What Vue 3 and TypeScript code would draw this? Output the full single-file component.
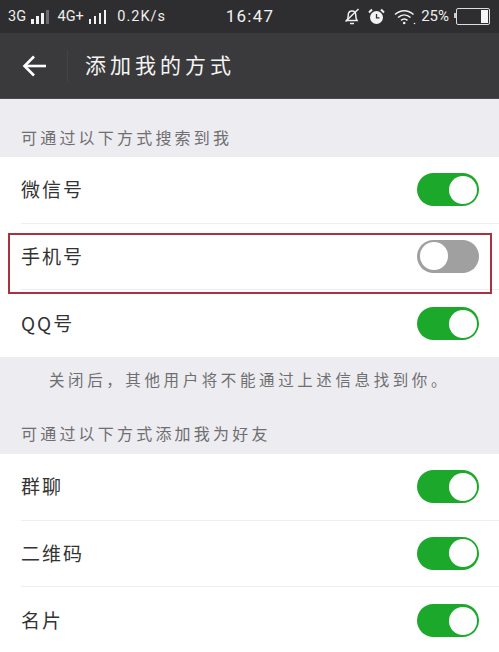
<script setup lang="ts">
interface Row { label: string; on: boolean; marked?: boolean }
const searchRows: Row[] = [
  { label: '微信号', on: true },
  { label: '手机号', on: false, marked: true },
  { label: 'QQ号', on: true },
]
const addRows: Row[] = [
  { label: '群聊', on: true },
  { label: '二维码', on: true },
  { label: '名片', on: true },
]
const bars = [5, 8, 11, 14]
</script>

<template>
  <div class="page">
    <div class="status">
      <div class="group left">
        <span>3G</span>
        <span class="bars"><i v-for="(h, n) in bars" :key="n" :class="{ dim: n === 3 }" :style="{ height: h + 'px' }"></i></span>
        <span class="gap">4G+</span>
        <span class="bars"><i v-for="h in bars" :key="h" :style="{ height: h + 'px' }"></i></span>
        <span class="gap wide">0.2K/s</span>
      </div>
      <div class="time">16:47</div>
      <div class="group right">
        <svg width="16" height="17" viewBox="0 0 16 17" fill="none" stroke="#eee" stroke-width="1.5">
          <path d="M3 12.5c1-1.500 1.200-3 1.200-5C4.200 4.500 6 3 8 3s3.800 1.500 3.800 4.500c0 2 .2 3.500 1.200 5z" />
          <path d="M1.500 13.500 14.500 1" />
          <path d="M6 15.500h4" />
        </svg>
        <svg class="alarm" width="17" height="17" viewBox="0 0 17 17">
          <circle cx="8.500" cy="9.500" r="6.500" fill="#f2f2f2" />
          <path d="M1 4.500 4 1.500M16 4.500l-3-3" stroke="#f2f2f2" stroke-width="2" />
          <path d="M8.500 6v3.800h3" fill="none" stroke="#2e2d2f" stroke-width="1.300" />
        </svg>
        <svg class="wifi" width="22" height="16" viewBox="0 0 22 16" fill="none" stroke="#f2f2f2" stroke-width="1.500">
          <path d="M1 5.500c5.500-5 13-5 18.500 0" />
          <path d="M4 8.500c3.800-3.400 8.700-3.400 12.500 0" />
          <path d="M7 11.300c2.200-1.800 4.300-1.800 6.500 0" />
          <circle cx="10.200" cy="14" r="1.300" fill="#f2f2f2" stroke="none" />
          <circle cx="20.500" cy="14.500" r=".8" fill="#f2f2f2" stroke="none" />
        </svg>
        <span class="pct">25%</span>
        <span class="battery"><b></b></span>
      </div>
    </div>

    <header class="nav">
      <svg class="back" width="24" height="22" viewBox="0 0 24 22" fill="none" stroke="#fff" stroke-width="2.600">
        <path d="M12 1.500 2.500 11l9.500 9.500" />
        <path d="M3 11h21" />
      </svg>
      <span class="divider"></span>
      <h1>添加我的方式</h1>
    </header>

    <div class="section-title first">可通过以下方式搜索到我</div>
    <div class="list">
      <div v-for="row in searchRows" :key="row.label" class="row">
        <span class="label">{{ row.label }}</span>
        <span class="switch" :class="{ on: row.on }"><span class="knob"></span></span>
        <span v-if="row.marked" class="mark"></span>
      </div>
    </div>

    <p class="note">关闭后，其他用户将不能通过上述信息找到你。</p>
    <div class="section-title second">可通过以下方式添加我为好友</div>
    <div class="list">
      <div v-for="row in addRows" :key="row.label" class="row">
        <span class="label">{{ row.label }}</span>
        <span class="switch" :class="{ on: row.on }"><span class="knob"></span></span>
      </div>
    </div>
  </div>
</template>

<style>
html, body { margin: 0; background: #edecf1; }
</style>

<style scoped>
.page {
  width: 499px;
  height: 652px;
  overflow: hidden;
  background: #edecf1;
  font-family: "Noto Sans CJK SC", "Noto Sans", sans-serif;
}
.status {
  height: 33px;
  box-sizing: border-box;
  padding: 0 8px;
  background: #2e2d2f;
  color: #eee;
  font: 14.500px/33px Roboto, sans-serif;
  display: grid;
  grid-template-columns: 1fr auto 1fr;
  align-items: center;
}
.group { display: flex; align-items: center; }
.right { justify-content: flex-end; }
.gap { margin-left: 9px; }
.wide { margin-left: 11px; letter-spacing: 1px; }
.bars { display: inline-flex; align-items: flex-end; gap: 2.500px; margin-left: 5px; height: 15px; }
.bars i { width: 2.500px; background: #f2f2f2; }
.bars i.dim { background: #6a696b; }
.time { font-size: 17px; letter-spacing: 1.200px; color: #f2f2f2; margin-left: 1px; }
.alarm { margin-left: 8px; }
.wifi { margin-left: 9px; }
.pct { margin-left: 5px; font-size: 15px; }
.battery {
  position: relative;
  width: 30px;
  height: 13px;
  margin-left: 7px;
  margin-right: 1px;
  border: 1px solid #ddd;
  border-radius: 2px;
  display: flex;
  justify-content: flex-end;
  padding: 1px;
  box-sizing: content-box;
}
.battery::before {
  content: "";
  position: absolute;
  left: -3px;
  top: 4px;
  width: 2px;
  height: 5px;
  background: #ccc;
}
.battery b { width: 7px; background: #f4f4f4; }
.nav {
  height: 66px;
  background: #3a3a3c;
  display: flex;
  align-items: center;
  padding-left: 22px;
  border-bottom: 1px solid #4a4a4c;
  box-sizing: border-box;
}
.divider { width: 1px; height: 32px; background: #444446; margin-left: 21px; }
h1 {
  margin: -2px 0 0 17px;
  color: #f4f4f4;
  font-size: 21px;
  font-weight: 400;
  letter-spacing: 4px;
  line-height: 1;
}
.section-title {
  box-sizing: border-box;
  padding-left: 21px;
  color: #6f6e70;
  font-size: 16px;
  line-height: 22px;
  letter-spacing: 3.200px;
}
.section-title.first { height: 58px; padding-top: 27px; }
.section-title.second { height: 32px; }
.list { background: #fff; }
.row {
  position: relative;
  height: 66.670px;
  margin-left: 21px;
  padding-right: 20px;
  display: flex;
  align-items: center;
  justify-content: space-between;
  border-bottom: 1px solid #eeeeee;
  box-sizing: border-box;
}
.row:last-child { border-bottom: 0; }
.label {
  color: #333;
  font-size: 19px;
  letter-spacing: 2px;
  margin-top: -2px;
}
.switch {
  width: 62px;
  height: 33px;
  border-radius: 17px;
  background: #a0a0a0;
  display: flex;
  align-items: center;
  padding: 2.500px;
  box-sizing: border-box;
}
.switch.on { background: #1ca82a; justify-content: flex-end; }
.knob { width: 28px; height: 28px; border-radius: 50%; background: #fff; }
.mark {
  position: absolute;
  left: -13px;
  right: 7px;
  top: 9px;
  bottom: -5px;
  border: 2px solid #a8323f;
  pointer-events: none;
}
.note {
  margin: 0;
  height: 65px;
  padding-top: 11px;
  box-sizing: border-box;
  text-align: center;
  color: #6f6e70;
  font-size: 15.500px;
  line-height: 22px;
  letter-spacing: 3.600px;
}
</style>
